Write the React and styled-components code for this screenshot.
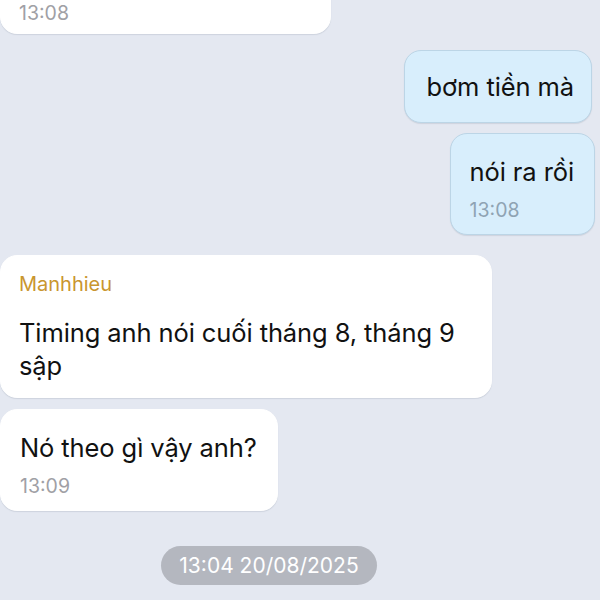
import styled, { createGlobalStyle } from 'styled-components';

const GlobalStyle = createGlobalStyle`
  html, body {
    margin: 0;
    padding: 0;
    background: #e4e8f1;
    font-family: Inter, "Noto Sans", "Liberation Sans", sans-serif;
    -webkit-font-smoothing: antialiased;
  }
`;

const messages = [
  { id: 1, side: 'left', time: '13:08', clipped: true },
  { id: 2, side: 'right', text: 'bơm tiền mà', gap: 16, inset: 8 },
  { id: 3, side: 'right', text: 'nói ra rồi', time: '13:08', gap: 10, inset: 5 },
  {
    id: 4,
    side: 'left',
    sender: 'Manhhieu',
    text: 'Timing anh nói cuối tháng 8, tháng 9 sập',
    gap: 20,
    wide: true,
  },
  { id: 5, side: 'left', text: 'Nó theo gì vậy anh?', time: '13:09', gap: 11 },
];

const App = () => {
  return (
    <>
      <GlobalStyle />
      <Chat>
        {messages.map((m) => (
          <Row key={m.id} side={m.side} gap={m.gap} inset={m.inset}>
            <Bubble
              side={m.side}
              clipped={m.clipped}
              wide={m.wide}
              hasTime={!!m.time}
              hasSender={!!m.sender}
            >
              {m.sender && <Sender>{m.sender}</Sender>}
              {m.text && <Text>{m.text}</Text>}
              {m.time && <Time side={m.side} solo={!m.text}>{m.time}</Time>}
            </Bubble>
          </Row>
        ))}
        <DateRow>
          <DatePill>13:04 20/08/2025</DatePill>
        </DateRow>
      </Chat>
    </>
  );
};

export default App;

const Chat = styled.div`
  width: 600px;
  height: 600px;
  overflow: hidden;
  display: flex;
  flex-direction: column;
  background: #e4e8f1;
`;

const Row = styled.div`
  display: flex;
  justify-content: ${(p) => (p.side === 'right' ? 'flex-end' : 'flex-start')};
  margin-top: ${(p) => (p.gap ? `${p.gap}px` : 0)};
  padding-right: ${(p) => (p.inset ? `${p.inset}px` : 0)};
`;

const padFor = (p) => {
  if (p.clipped) return '40px 20px 8px 18px';
  if (p.hasSender) return '16px 20px 15px 18px';
  if (p.hasTime) return '21px 20px 12px 19px';
  return '19px 17px 19px 21px';
};

const Bubble = styled.div`
  box-sizing: border-box;
  border-radius: 17px;
  background: ${(p) => (p.side === 'right' ? '#d8eefc' : '#ffffff')};
  border: 1px solid ${(p) => (p.side === 'right' ? '#bcd5e6' : '#ffffff')};
  box-shadow: 0 1px 1px rgba(120, 130, 150, 0.2);
  padding: ${padFor};
  margin-top: ${(p) => (p.clipped ? '-40px' : 0)};
  width: ${(p) => (p.clipped ? '331px' : p.wide ? '492px' : 'auto')};
  max-width: 492px;
  border-top-left-radius: ${(p) => (p.clipped ? 0 : '17px')};
`;

const Sender = styled.div`
  font-size: 20px;
  line-height: 24px;
  color: #c9962f;
  margin-bottom: 20px;
`;

const Text = styled.div`
  font-size: 25.5px;
  line-height: 33px;
  color: #111111;
  letter-spacing: -0.1px;
`;

const Time = styled.div`
  font-size: 19.5px;
  line-height: 24px;
  margin-top: ${(p) => (p.solo ? 0 : '10px')};
  color: ${(p) => (p.side === 'right' ? '#8fa3b3' : '#a0a0a5')};
`;

const DateRow = styled.div`
  display: flex;
  justify-content: center;
  margin-top: 35px;
  padding-right: 62px;
`;

const DatePill = styled.div`
  background: #b4b7bf;
  color: #ffffff;
  font-size: 21px;
  line-height: 39px;
  padding: 0 18px;
  border-radius: 20px;
`;
